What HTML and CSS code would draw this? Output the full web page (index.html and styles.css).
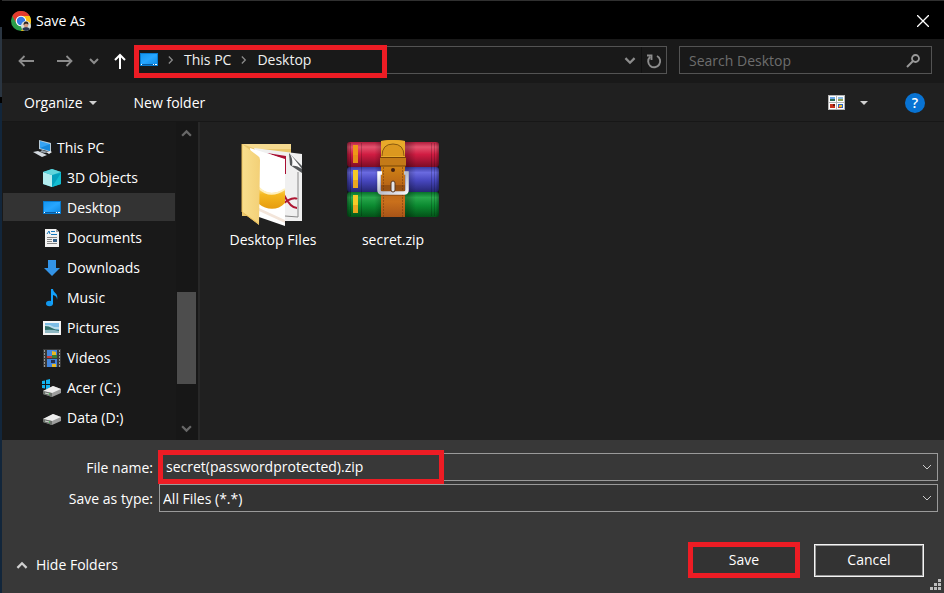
FILE: index.html
```html
<!DOCTYPE html>
<html lang="en">
<head>
<meta charset="utf-8">
<title>Save As</title>
<link rel="stylesheet" href="styles.css">
</head>
<body>
<svg class="defs" aria-hidden="true">
  <defs>
    <linearGradient id="screen" x1="0" y1="0" x2="1" y2="1"><stop offset="0" stop-color="#1596f0"/><stop offset=".5" stop-color="#27a6ff"/><stop offset="1" stop-color="#108ce6"/></linearGradient>
    <linearGradient id="yellow" x1="0" y1="0" x2="1" y2="0"><stop offset="0" stop-color="#f9df8e"/><stop offset="1" stop-color="#f3d077"/></linearGradient>
    <linearGradient id="bowl" x1="0" y1="0" x2="0" y2="1"><stop offset="0" stop-color="#fbe08a"/><stop offset=".35" stop-color="#f5b81f"/><stop offset="1" stop-color="#e69c10"/></linearGradient>
    <linearGradient id="red" x1="0" y1="0" x2="0" y2="1"><stop offset="0" stop-color="#b01c3c"/><stop offset=".2" stop-color="#e4536e"/><stop offset=".5" stop-color="#d01c42"/><stop offset="1" stop-color="#7d0c26"/></linearGradient>
    <linearGradient id="blue" x1="0" y1="0" x2="0" y2="1"><stop offset="0" stop-color="#3a3aa0"/><stop offset=".22" stop-color="#6a6ae0"/><stop offset=".55" stop-color="#4646bd"/><stop offset="1" stop-color="#262672"/></linearGradient>
    <linearGradient id="green" x1="0" y1="0" x2="0" y2="1"><stop offset="0" stop-color="#08702a"/><stop offset=".22" stop-color="#28a84c"/><stop offset=".55" stop-color="#0b8a30"/><stop offset="1" stop-color="#035218"/></linearGradient>
    <linearGradient id="strap" x1="0" y1="0" x2="0" y2="1"><stop offset="0" stop-color="#e8a21a"/><stop offset=".35" stop-color="#cf8216"/><stop offset=".6" stop-color="#b86415"/><stop offset=".8" stop-color="#c9701c"/><stop offset="1" stop-color="#a85418"/></linearGradient>
    <linearGradient id="metal" x1="0" y1="0" x2="1" y2="1"><stop offset="0" stop-color="#fff"/><stop offset=".5" stop-color="#b8bcc8"/><stop offset="1" stop-color="#f4f4f8"/></linearGradient>
    <linearGradient id="shade" x1="0" y1="0" x2="1" y2="0"><stop offset="0" stop-color="#000" stop-opacity=".4"/><stop offset=".05" stop-color="#000" stop-opacity="0"/><stop offset=".3" stop-color="#000" stop-opacity="0"/><stop offset=".38" stop-color="#000" stop-opacity=".25"/><stop offset=".66" stop-color="#000" stop-opacity=".25"/><stop offset=".75" stop-color="#000" stop-opacity="0"/><stop offset=".96" stop-color="#000" stop-opacity="0"/><stop offset="1" stop-color="#000" stop-opacity=".35"/></linearGradient>
    <symbol id="i-desktop" viewBox="0 0 18 14"><rect width="18" height="13" fill="#087bd0"/><rect x="1" y="1" width="16" height="10" fill="url(#screen)"/><path d="M1 11.500h16" stroke="#0a5ba0"/><path d="M1 11h1v1H1zM13 11h1v1h-1zM15 11h2v1h-2z" fill="#fff"/></symbol>
    <symbol id="i-down" viewBox="0 0 10 7"><path d="M1 1l4 4 4-4" fill="none" stroke="currentColor" stroke-width="2"/></symbol>
    <symbol id="i-thin" viewBox="0 0 10 7"><path d="M1 1l4 4 4-4" fill="none" stroke="currentColor"/></symbol>
    <symbol id="i-right" viewBox="0 0 7 10"><path d="M1 1l4 4-4 4" fill="none" stroke="currentColor" stroke-width="1.500"/></symbol>
    <symbol id="i-drive" viewBox="0 0 20 14"><path d="M1 8l10-5 8 3v4l-9 4-9-3z" fill="#9c9c9c"/><path d="M1 8l10-5 8 3-9 4z" fill="#ededed"/><path d="M1 8l9 2v4l-9-3z" fill="#6b706b"/><path d="M3 10l4 1" stroke="#d6ded6"/><path d="M7 11h1" stroke="#43dd55"/></symbol>
  </defs>
</svg>
<div class="backdrop">
<main class="dialog">
  <header class="titlebar">
    <svg width="20" height="20" viewBox="0 0 20 20" aria-hidden="true">
      <circle cx="10" cy="10" r="10" fill="#2a9f4a"/>
      <path d="M1.300 5A10 10 0 0 1 18.700 5H10L5.500 12.500z" fill="#e33b2e"/>
      <path d="M18.700 5A10 10 0 0 1 10 20l4.500-7.500L10 5z" fill="#fbc116"/>
      <circle cx="10" cy="10" r="5.300" fill="#fff"/><circle cx="10" cy="10" r="4.200" fill="#3279e5"/>
      <circle cx="15" cy="15" r="5" fill="#d8ddd8"/><path d="M11 18q4-4 8 0-4 4-8 0z" fill="#26344f"/><circle cx="15" cy="14" r="2.300" fill="#d49a7d"/><path d="M12.500 14q0-3.500 2.500-3.500t2.500 3l-2.500-1z" fill="#2b211d"/>
    </svg>
    <h1>Save As</h1>
    <button class="icon-button close" aria-label="Close"><svg width="12" height="12" viewBox="0 0 12 12"><path d="M0 0l12 12M12 0L0 12" stroke="currentColor" stroke-width="1.300"/></svg></button>
  </header>

  <nav class="navbar" aria-label="Location">
    <button class="icon-button step" aria-label="Back"><svg width="16" height="12" viewBox="0 0 16 12"><path d="M16 6H1.500M6.500 1l-5 5 5 5" fill="none" stroke="currentColor" stroke-width="1.800"/></svg></button>
    <button class="icon-button step" aria-label="Forward"><svg width="16" height="12" viewBox="0 0 16 12"><path d="M0 6h14.500M9.500 1l5 5-5 5" fill="none" stroke="currentColor" stroke-width="1.800"/></svg></button>
    <button class="icon-button recent" aria-label="Recent locations"><svg width="10" height="7"><use href="#i-down"/></svg></button>
    <button class="icon-button up" aria-label="Up"><svg width="12" height="16" viewBox="0 0 12 16"><path d="M6 16V2M1 7l5-5 5 5" fill="none" stroke="currentColor" stroke-width="2"/></svg></button>
    <div class="address">
      <div class="crumbs">
        <svg width="18" height="14"><use href="#i-desktop"/></svg>
        <svg class="sep" width="6" height="10"><use href="#i-right"/></svg>
        <a href="#pc">This PC</a>
        <svg class="sep" width="6" height="10"><use href="#i-right"/></svg>
        <a href="#desktop">Desktop</a>
      </div>
      <button class="icon-button history" aria-label="Previous locations"><svg width="12" height="8"><use href="#i-down"/></svg></button>
      <button class="icon-button refresh" aria-label="Refresh"><svg width="16" height="16" viewBox="0 0 16 16"><path d="M11 3A6 6 0 1 1 4 4M1 2.500h4.500V7" fill="none" stroke="currentColor" stroke-width="1.900"/></svg></button>
      <span class="mark"></span>
    </div>
    <div class="search">
      <input type="search" aria-label="Search Desktop" placeholder="Search Desktop">
      <svg width="14" height="14" viewBox="0 0 14 14" aria-hidden="true"><circle cx="9.500" cy="4.500" r="3.500" fill="none" stroke="currentColor" stroke-width="1.800"/><path d="M7 7L1 13" stroke="currentColor" stroke-width="2"/></svg>
    </div>
  </nav>

  <div class="toolbar">
    <button class="text-button">Organize <span class="caret"></span></button>
    <button class="text-button">New folder</button>
    <button class="text-button view" aria-label="Change your view">
      <svg width="17" height="15" viewBox="0 0 17 15"><path d="M0 0h17v15H0z" fill="#b5b5b5"/><path d="M1 1h7v6H1zM9 1h7v6H9zM1 8h7v6H1zM9 8h7v6H9z" fill="#fff"/><path d="M2 2h5v2H2z" fill="#6aa7e8"/><path d="M2 4h5v2H2z" fill="#2c6c55"/><path d="M10 2h5v2h-5z" fill="#8abbe0"/><path d="M10 4h5v2h-5z" fill="#8b9c52"/><path d="M2 9h5v4H2z" fill="#c8331c"/><path d="M5 9h2v2H5z" fill="#6c1811"/><path d="M10 9h5v4h-5z" fill="#2d66c4"/><path d="M11 10h3v2h-3z" fill="#f1c327"/><path d="M10 12h3v1h-3z" fill="#c93720"/></svg>
      <span class="caret"></span>
    </button>
    <button class="help" aria-label="Help">?</button>
  </div>

  <div class="browser">
    <aside class="sidebar">
      <ul class="tree">
        <li><a class="root" href="#pc"><svg width="20" height="18" viewBox="0 0 20 18"><path d="M6 1l12 3v9L6 10z" fill="#b8cbd8"/><path d="M7 2l10 3v7L7 9z" fill="#36a4f5"/><path d="M7 9l10-4v7z" fill="#1688dc"/><path d="M9 11l6 2-3 1-5-1z" fill="#96a2ab"/><path d="M0 13l5-1 9 4-5 2z" fill="#d3d9df"/><path d="M13 13l4-1 2 1-3 2z" fill="#e8ebee"/></svg>This PC</a></li>
        <li><a href="#objects"><svg width="20" height="18" viewBox="0 0 20 18"><path d="M10 0l9 3v12l-9 3-9-3V3z" fill="#18a9c0"/><path d="M1 3l9 3v12l-9-3z" fill="#b4edf0"/><path d="M10 6l9-3v12l-9 3z" fill="#12bdd1"/><path d="M10 6v12l9-14z" fill="#05a0bd"/><path d="M1 3l9-3 9 3-9 3z" fill="#60d5dc"/></svg>3D Objects</a></li>
        <li><a class="selected" href="#desktop"><svg width="20" height="14"><use href="#i-desktop"/></svg>Desktop</a></li>
        <li><a href="#documents"><svg width="20" height="18" viewBox="0 0 20 18"><path d="M3 0h11l3 3v15H3z" fill="#f2f2f2"/><path d="M14 0v3h3z" fill="#999"/><path d="M5 5l2-3 1 3M9 2.500h4M9 5.500h6" fill="none" stroke="#1878bc"/><path d="M5 8.500h10M5 10.500h5M5 12.500h5M5 14.500h10" stroke="#858585"/><path d="M11 10h4v3h-4z" fill="#335f87"/></svg>Documents</a></li>
        <li><a href="#downloads"><svg width="20" height="16" viewBox="0 0 20 16"><path d="M6 0h8v8h4l-8 8-8-8h4z" fill="#3394e8"/></svg>Downloads</a></li>
        <li><a href="#music"><svg width="20" height="18" viewBox="0 0 20 18"><ellipse cx="7.500" cy="14.500" rx="3.500" ry="2.800" fill="#1197ed"/><path d="M9 0h2c0 4 6 4 4 11 0-3-1-4-4-5v9H9z" fill="#12a0fa"/></svg>Music</a></li>
        <li><a href="#pictures"><svg width="20" height="14" viewBox="0 0 20 14"><path d="M1 0h18v14H1z" fill="#f4f4f4"/><path d="M3 2h14v10H3z" fill="#7dbde6"/><path d="M3 4h5l4 2h5v2H3z" fill="#b9dcec"/><path d="M3 5q4 0 7 2t7 2v1H3z" fill="#2e6d68"/><path d="M3 9q7-1 14 1v2H3z" fill="#8fb9c4"/></svg>Pictures</a></li>
        <li><a href="#videos"><svg width="20" height="18" viewBox="0 0 20 18"><path d="M1 0h18v18H1z" fill="#393939"/><path d="M2.500 1v17M17.500 1v17" stroke="#999" stroke-dasharray="2 1"/><path d="M5 1h10v8H5zM5 10h10v8H5z" fill="#4385dc"/><path d="M10 2l4 1v4l-4 1z" fill="#e9b924"/><path d="M5 7h5v2H5z" fill="#c53c3a"/><path d="M10 6h5v3h-5z" fill="#377c38"/><path d="M9 11h4v3H9z" fill="#26304d"/><path d="M10 15h4v3h-4z" fill="#e9b924"/></svg>Videos</a></li>
        <li><a href="#c"><svg width="20" height="18" viewBox="0 0 20 18"><path d="M0 2l3-.5V5H0zM4 1l4-1v5H4zM0 6h3v3.500L0 9zM4 6h4v4.500L4 10z" fill="#12b4f1"/><use href="#i-drive" x="0" y="4" width="20" height="14"/></svg>Acer (C:)</a></li>
        <li><a href="#d"><svg width="20" height="14"><use href="#i-drive"/></svg>Data (D:)</a></li>
      </ul>
      <div class="scrollbar" aria-hidden="true">
        <svg class="flip" width="11" height="8"><use href="#i-down"/></svg>
        <div class="track"><div class="thumb"></div></div>
        <svg width="11" height="8"><use href="#i-down"/></svg>
      </div>
    </aside>
    <section class="files" aria-label="Files">
      <figure>
        <svg width="96" height="96" viewBox="-1 -1 96 96" aria-hidden="true">
          <path d="M16 9h49v72H16z" fill="#e9c66c"/><path d="M16 9h49v5H30z" fill="#f5da90"/>
          <path d="M28 13l48 6v67H58z" fill="#f0f0f0"/>
          <path d="M63 18l1 12 12 8V31z" fill="#55585a"/><path d="M62 16l14 18c-4-3-8-4-10-3 1-5 0-10-4-15z" fill="#fcfcfc"/><path d="M72 37v45l-13-1" fill="none" stroke="#888"/>
          <path d="M41 18l19 3v18h-3V24z" fill="#a90f34"/>
          <path d="M58 60c4 8 8 13 13 13M58 68c5-4 11-6 13-4" fill="none" stroke="#ae1833" stroke-width="2"/>
          <path d="M24 13l35 11v67L33 82z" fill="#fff"/>
          <path d="M33 52q10 11 26 2v14c-7 8-19 7-26 1z" fill="url(#bowl)"/><path d="M33 53q11 11 26 1" fill="none" stroke="#fff0bd" stroke-width="2"/>
          <path d="M33 73l26 12v3L33 76z" fill="#f3e5da"/>
          <path d="M16 9l16 12q2 1 2 4l-1 65-17-13z" fill="url(#yellow)"/><path d="M16 9v68l17 12" fill="none" stroke="#e9bd58"/>
        </svg>
        <figcaption>Desktop FIles</figcaption>
      </figure>
      <figure>
        <svg width="96" height="96" viewBox="0 -1 96 96" aria-hidden="true">
          <rect x="2" y="7" width="92" height="25" rx="3" fill="url(#red)"/><rect x="2" y="32" width="92" height="25" rx="3" fill="url(#blue)"/><rect x="2" y="57" width="92" height="25" rx="3" fill="url(#green)"/>
          <rect x="2" y="7" width="92" height="75" rx="3" fill="url(#shade)"/>
          <path d="M5.500 8v73M16.500 8v73M86.500 8v73M89.500 8v73" stroke="#000" stroke-opacity=".2"/>
          <path d="M8 10h5v18H8z" fill="#ee9718"/><path d="M8 35h5v18H8zM8 60h5v18H8z" fill="#f5ca28"/><path d="M8 20h5v8H8zM8 45h5v8H8zM8 70h5v8H8z" fill="#de8415" opacity=".5"/>
          <path d="M36 6q12-2 24 0v76H36z" fill="url(#strap)"/><path d="M36 6q12-2 24 0v16H36z" fill="#e9aa2a"/><path d="M37 21q0-12 11-12t11 12" fill="#dc981f" stroke="#8a5a10"/>
          <path d="M35 23h26v8H35z" fill="#c47a18"/><path d="M35 22.500h26M35 31h26" stroke="#774405"/>
          <path d="M38.500 32v50M57.500 32v50" stroke="#6f3710" stroke-dasharray="2 1" opacity=".5"/>
          <path d="M36 50h24v11H36z" fill="#5a2a0a" opacity=".35"/>
          <circle cx="48" cy="35" r="2" fill="#442010"/>
          <path d="M37 38h-3v17q0 3 3 3h22q3 0 3-3V38h-3" fill="none" stroke="url(#metal)" stroke-width="3.500"/>
          <rect x="46" y="46" width="4" height="11" rx="2" fill="#e3e5e8" stroke="#5d391e"/>
        </svg>
        <figcaption>secret.zip</figcaption>
      </figure>
    </section>
  </div>

  <form class="footer">
    <div class="fields">
      <label for="name">File name:</label>
      <div class="combo name"><input id="name" type="text" value="secret(passwordprotected).zip"><svg width="10" height="7"><use href="#i-thin"/></svg><span class="mark"></span></div>
      <label for="type">Save as type:</label>
      <div class="combo type"><select id="type"><option>All Files (*.*)</option></select><svg width="10" height="7"><use href="#i-thin"/></svg></div>
    </div>
    <div class="actions">
      <button type="button" class="text-button hide"><svg class="flip" width="12" height="8"><use href="#i-down"/></svg>Hide Folders</button>
      <button type="button" class="save">Save</button>
      <button type="button" class="cancel">Cancel</button>
    </div>
    <svg class="grip" width="11" height="11" viewBox="0 0 11 11" aria-hidden="true"><path d="M8 0h3v3H8zM4 4h3v3H4zM8 4h3v3H8zM0 8h3v3H0zM4 8h3v3H4zM8 8h3v3H8z" fill="#bdbdbd"/></svg>
  </form>
</main>
</div>
</body>
</html>
```
FILE: styles.css
```css
* { box-sizing: border-box; }

body {
  margin: 0;
  background: #000;
  color: #fff;
  font: 14px/20px "Open Sans", "Noto Sans", sans-serif;
}

button, input, select {
  margin: 0;
  padding: 0;
  border: 0;
  border-radius: 0;
  background: none;
  color: inherit;
  font: inherit;
}

a { color: inherit; text-decoration: none; }
svg { display: block; flex: none; }
.defs { position: absolute; width: 0; height: 0; }
.flip { transform: scaleY(-1); }

.backdrop {
  height: 100vh;
  padding-left: 2px;
  background: linear-gradient(#000 27px, #2a3541 27px 97px, #000 97px 103px, #12263b 103px);
}

.dialog {
  display: flex;
  flex-direction: column;
  height: 100%;
  border-top: 1px solid #303030;
  background: #191919;
}

.icon-button {
  display: flex;
  align-items: center;
  justify-content: center;
}

/* Title bar */
.titlebar {
  display: flex;
  align-items: center;
  gap: 5px;
  height: 38px;
  padding: 1px 15px 0 9px;
  background: #000;
}
.titlebar h1 { margin: 0; font-size: 14px; font-weight: 400; }
.close { width: 12px; height: 20px; margin-left: auto; }

/* Navigation */
.navbar {
  display: flex;
  height: 44px;
  padding: 7px 12px 9px 4px;
  color: #8c8c8c;
}
.step { width: 39px; padding-top: 2px; }
.recent { width: 20px; padding-top: 2px; }
.up { width: 30px; padding: 2px 0 0 2px; color: #fff; }
.address {
  position: relative;
  display: flex;
  flex: 1;
  border: 1px solid #535353;
}
.crumbs {
  display: flex;
  flex: 1;
  align-items: center;
  gap: 10px;
  padding-left: 5px;
  color: #f0f0f0;
}
.sep { color: #8c8c8c; }
.history { width: 24px; padding-top: 2px; border-right: 1px solid #111; }
.refresh { width: 24px; padding-top: 2px; }

/* Red outlines that call attention to a field */
.mark {
  position: absolute;
  border: 5px solid #ed1c24;
  pointer-events: none;
}
.address .mark { inset: -2px auto -5px -1px; width: 253px; }

.search {
  display: flex;
  align-items: center;
  width: 253px;
  margin-left: 12px;
  padding: 2px 11px 0 9px;
  border: 1px solid #535353;
  color: #999;
}
.search input { flex: 1; min-width: 0; outline: 0; appearance: none; }
.search input::placeholder { color: #6d6d6d; }

/* Toolbar */
.toolbar {
  display: flex;
  align-items: center;
  height: 39px;
  padding: 1px 19px 0 22px;
  gap: 37px;
  border-bottom: 1px solid #171717;
  background: #202020;
}
.text-button { display: flex; align-items: center; gap: 6px; }
.caret {
  border: 4px solid transparent;
  border-top-color: #d0d0d0;
  border-bottom-width: 0;
}
.view { gap: 15px; margin-left: auto; }
.help {
  width: 20px;
  height: 20px;
  border-radius: 50%;
  background: #0873d3;
  font-weight: 600;
}

/* Browser */
.browser { display: flex; flex: 1; min-height: 0; }
.sidebar {
  display: flex;
  width: 198px;
  border-right: 2px solid #282828;
}
.tree {
  display: flex;
  flex: 1;
  flex-direction: column;
  gap: 2px;
  margin: 0;
  padding: 11px 1px 0;
  list-style: none;
}
.tree a {
  display: flex;
  align-items: center;
  gap: 5px;
  height: 28px;
  padding: 2px 0 0 39px;
}
.tree .root { gap: 4px; padding-left: 30px; }
.tree .selected { background: #333; }
.scrollbar {
  display: flex;
  flex-direction: column;
  align-items: center;
  width: 22px;
  padding: 7px 2px 7px 0;
  background: #171717;
  color: #686868;
}
.track { flex: 1; width: 19px; }
.thumb { height: 32%; margin-top: 155px; background: #4d4d4d; }
.files {
  display: flex;
  flex: 1;
  align-items: flex-start;
  padding: 12px 13px;
  background: #202020;
}
figure {
  display: flex;
  flex-direction: column;
  align-items: center;
  width: 120px;
  margin: 0;
}

/* Footer */
.footer {
  position: relative;
  padding: 13px 6px 15px 0;
  background: #383838;
}
.fields {
  display: grid;
  grid-template-columns: 151px 1fr;
  column-gap: 6px;
  row-gap: 3px;
  align-items: center;
}
.fields label { padding-top: 2px; text-align: right; }
.combo {
  position: relative;
  display: flex;
  align-items: center;
  height: 28px;
  padding-right: 5px;
  border: 1px solid #9a9a9a;
}
.combo input, .combo select {
  flex: 1;
  min-width: 0;
  height: 26px;
  outline: 0;
  appearance: none;
}
.name { padding-left: 6px; }
.type { padding-left: 3px; background: #333; }
.combo input { padding-bottom: 2px; }
.combo select { padding-top: 2px; }
.combo svg { color: #ccc; }
.combo .mark { inset: -4px auto -4px -2px; width: 286px; }
.actions {
  display: flex;
  align-items: center;
  gap: 14px;
  margin-top: 30px;
  padding: 0 14px;
}
.hide { gap: 8px; margin-right: auto; padding-top: 10px; }
.hide svg { color: #d0d0d0; }
.save, .cancel { background: #333; }
.save { width: 112px; height: 36px; border: 5px solid #ed1c24; }
.cancel {
  width: 110px;
  height: 33px;
  border: 1px solid #f5f5f5;
  outline: 1px solid #9a9a9a;
  outline-offset: -2px;
}
.grip { position: absolute; right: 3px; bottom: 3px; }
```
